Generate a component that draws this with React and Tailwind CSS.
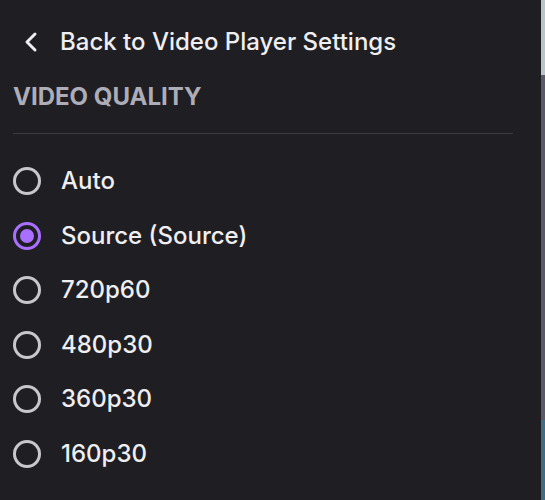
import React, { useState } from 'react';

const qualities = ['Auto', 'Source (Source)', '720p60', '480p30', '360p30', '160p30'];

const Radio = ({ checked }) => (
  <span
    className={
      'flex h-[28px] w-[28px] shrink-0 items-center justify-center rounded-full border-[3px] ' +
      (checked ? 'border-[#a970ff]' : 'border-[#c8c8cc]')
    }
  >
    {checked && <span className="h-[14px] w-[14px] rounded-full bg-[#a970ff]" />}
  </span>
);

const App = () => {
  const [selected, setSelected] = useState('Source (Source)');

  return (
    <div className="flex h-[500px] w-[545px] bg-[#1f1e23]" style={{ fontFamily: 'Inter, "Liberation Sans", sans-serif' }}>
      <div className="flex w-[541px] flex-col pl-[13px] pr-[28px]">
        {/* back row */}
        <button className="mt-[29px] flex h-[26px] items-center text-left text-[#efeff1]">
          <svg width="16" height="22" viewBox="0 0 16 22" className="ml-[10px] mr-[21px]">
            <path d="M12 3 L4 11 L12 19" fill="none" stroke="#efeff1" strokeWidth="3" strokeLinecap="round" strokeLinejoin="round" />
          </svg>
          <span className="text-[24px] font-medium leading-none">Back to Video Player Settings</span>
        </button>

        {/* header */}
        <div className="mt-[30px] text-[24px] font-bold leading-none text-[#adadb8]">VIDEO QUALITY</div>
        <div className="mt-[24px] h-px w-full bg-[#3a3a3f]" />

        {/* options */}
        <div className="mt-[33px] flex flex-col gap-[26.6px]">
          {qualities.map((q) => (
            <label key={q} className="flex h-[28px] cursor-pointer items-center gap-[20px]" onClick={() => setSelected(q)}>
              <Radio checked={selected === q} />
              <span className="text-[24px] font-medium leading-none text-[#efeff1]">{q}</span>
            </label>
          ))}
        </div>
      </div>

      {/* sliver of the video behind */}
      <div className="flex w-[4px] flex-col">
        <div className="h-[75px] bg-[#b9c6c9]" />
        <div className="flex-1 bg-[#5b5868]" />
        <div className="h-[80px] bg-[#3f6d86]" />
      </div>
    </div>
  );
};

export default App;
